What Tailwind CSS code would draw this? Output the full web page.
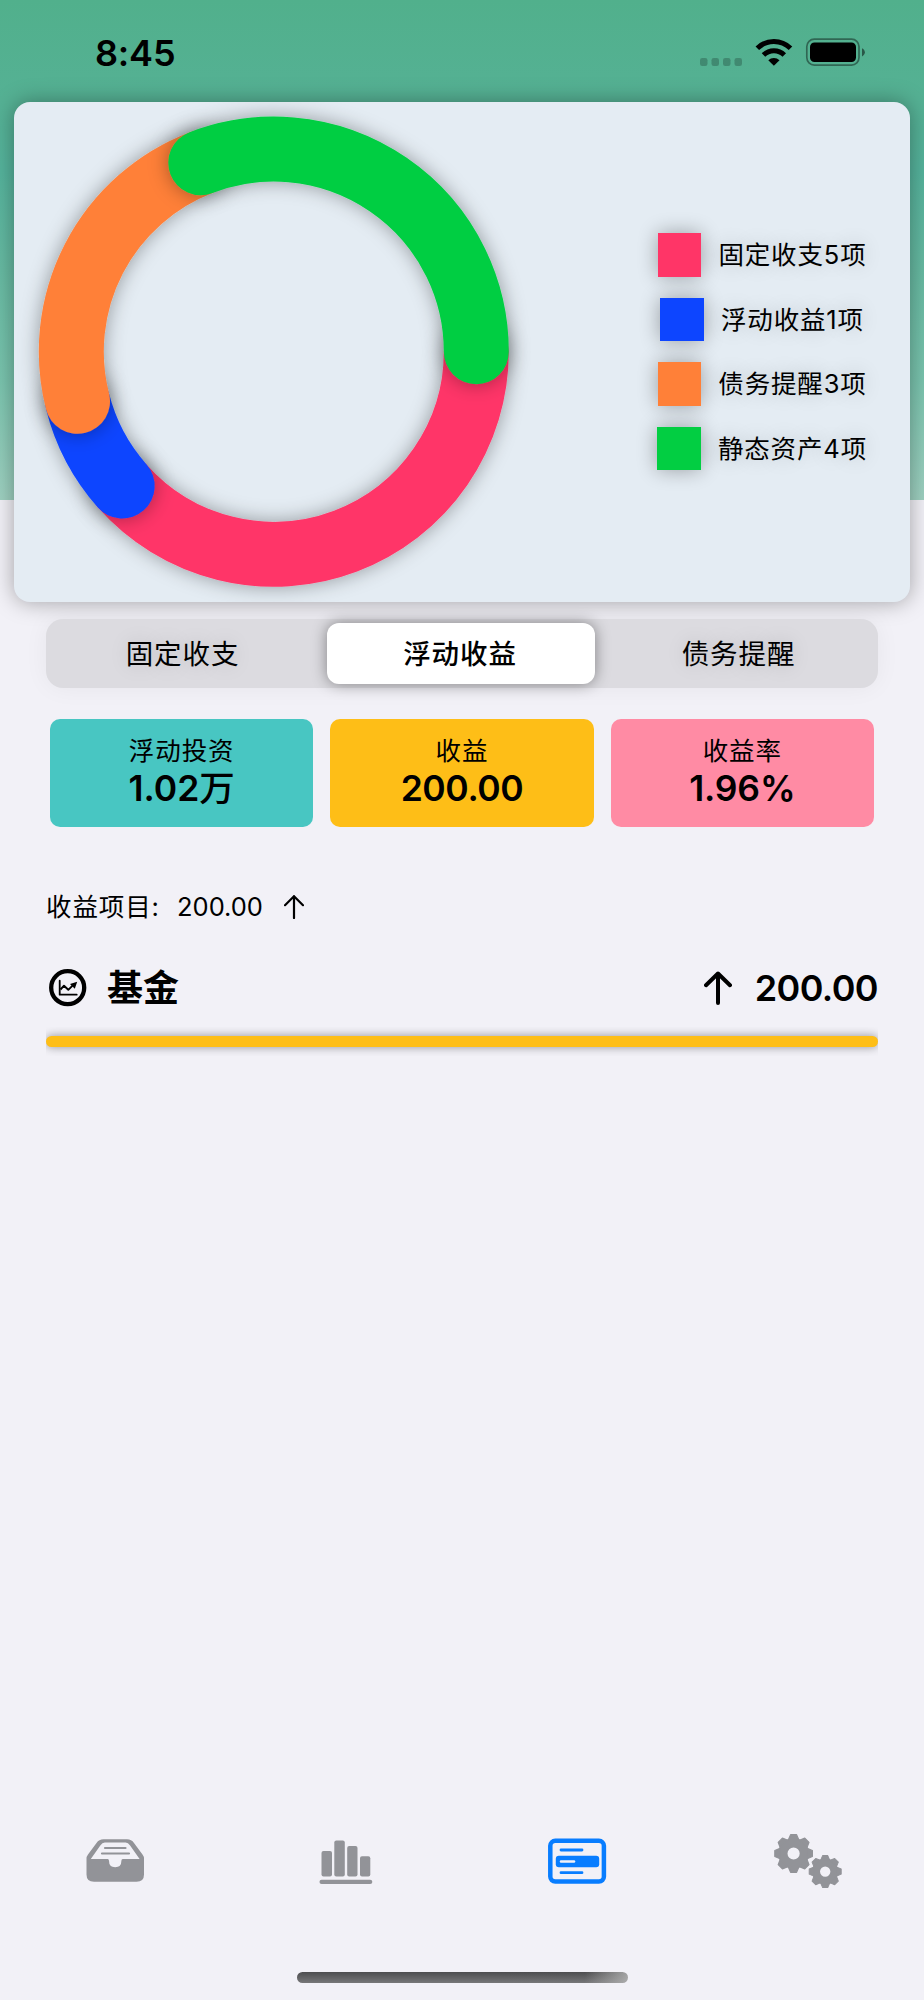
<!DOCTYPE html>
<html lang="zh-CN">
<head>
<meta charset="utf-8">
<title>资产</title>
<script src="https://cdn.jsdelivr.net/npm/@tailwindcss/browser@4"></script>
</head>
<body class="bg-[#f2f1f7]">
<div class="flex h-[2000px] w-[924px] flex-col overflow-hidden bg-[#f2f1f7] bg-[linear-gradient(180deg,#51b08c_0px,#55b194_100px,#55b39c_170px,#67baa2_270px,#7ac4ae_380px,#9fd1c1_500px,transparent_500px)] font-['Inter','Noto_Sans_CJK_SC',sans-serif] text-black">

  <header class="flex h-[102px] items-start justify-between pl-[95px] pr-[59px] pt-[30px]">
    <div class="pt-px text-[36px] font-semibold leading-[45px] tracking-[-0.2px]">8:45</div>
    <div class="flex pt-[8px]">
      <svg class="h-[30px] w-[165px]" viewBox="700 38 165 30">
        <g fill="#000" fill-opacity=".22"><rect x="700" y="58" width="7.5" height="8" rx="2.2"/><rect x="711.5" y="58" width="7.5" height="8" rx="2.2"/><rect x="723" y="58" width="7.5" height="8" rx="2.2"/><rect x="734.5" y="58" width="7.5" height="8" rx="2.2"/></g>
        <g fill="none" stroke="#000" stroke-width="5"><path d="M757.3 48.3a23.7 23.7 0 0 1 33.2 0"/><path d="M763.5 55a14.9 14.9 0 0 1 20.8 0"/></g>
        <path d="M773.9 65.8l-5.6-5.6a8.2 8.2 0 0 1 11.2 0z"/>
        <rect x="806.8" y="39.1" width="52.2" height="26" rx="7.5" fill="none" stroke="#000" stroke-opacity=".42" stroke-width="1.7"/>
        <rect x="810" y="42.5" width="46" height="19.5" rx="4.5"/>
        <path d="M862 48.2c3.8 2 3.8 6.200 0 8.200z" fill-opacity=".5"/>
      </svg>
    </div>
  </header>

  <section class="mx-[14px] flex h-[500px] shrink-0 items-center justify-between rounded-[16px] bg-[#e4ecf3] pr-[43px] shadow-[0_0_22px_rgba(0,0,0,0.34)]">
    <svg class="h-[500px] w-[520px]" viewBox="14 102 520 500">
      <defs><filter id="soft" x="0" y="90" width="560" height="530" filterUnits="userSpaceOnUse"><feDropShadow dx="0" dy="0" stdDeviation="10" flood-color="#000" flood-opacity=".36"/></filter></defs>
      <g fill="none" stroke-width="65" stroke-linecap="round">
        <g filter="url(#soft)"><path stroke="#ff3567" d="M476.300 351.700A202.500 202.500 0 0 1 122.200 486"/></g>
        <g filter="url(#soft)"><path stroke="#0d45ff" d="M122.200 486A202.500 202.500 0 0 1 77.500 401.300"/></g>
        <g filter="url(#soft)"><path stroke="#ff8038" d="M77.500 401.300A202.500 202.500 0 0 1 200.800 162.700"/></g>
        <g filter="url(#soft)"><path stroke="#02ce42" d="M200.800 162.700A202.500 202.500 0 0 1 476.300 351.700"/></g>
      </g>
    </svg>
    <ul class="-mt-px flex flex-col items-center gap-[21px] text-[25.500px] leading-[43.500px] tracking-[0.850px]">
      <li class="flex gap-[17px] [text-shadow:0_0_20px_rgba(0,0,0,0.2)]"><span class="size-[43.500px] bg-[#ff3567] shadow-[0_0_20px_rgba(0,0,0,0.33)]"></span>固定收支5项</li>
      <li class="flex gap-[17px] [text-shadow:0_0_20px_rgba(0,0,0,0.2)]"><span class="size-[43.500px] bg-[#0d45ff] shadow-[0_0_20px_rgba(0,0,0,0.33)]"></span>浮动收益1项</li>
      <li class="flex gap-[17px] [text-shadow:0_0_20px_rgba(0,0,0,0.2)]"><span class="size-[43.500px] bg-[#ff8038] shadow-[0_0_20px_rgba(0,0,0,0.33)]"></span>债务提醒3项</li>
      <li class="flex gap-[17px] [text-shadow:0_0_20px_rgba(0,0,0,0.2)]"><span class="size-[43.500px] bg-[#02ce42] shadow-[0_0_20px_rgba(0,0,0,0.33)]"></span>静态资产4项</li>
    </ul>
  </section>

  <nav class="mx-[46px] mt-[17px] grid h-[69px] shrink-0 grid-cols-[281px_268px_282px] rounded-[17px] bg-[#dcdbe0] py-[4px] text-center text-[27.500px] leading-[63px] tracking-[0.900px] shadow-[0_0_24px_rgba(0,0,0,0.05)]">
    <div class="pr-[8px] [text-shadow:0_0_20px_rgba(0,0,0,0.15)]">固定收支</div>
    <div class="h-[61px] rounded-[12px] bg-white pr-[2px] font-medium shadow-[0_0_15px_rgba(0,0,0,0.42)]">浮动收益</div>
    <div class="pl-[5px] [text-shadow:0_0_20px_rgba(0,0,0,0.15)]">债务提醒</div>
  </nav>

  <section class="mx-[50px] mt-[31px] grid h-[108px] shrink-0 grid-cols-3 gap-[17px] text-center">
    <div class="rounded-[10px] bg-[#48c6c2] pt-[14px]"><div class="text-[25.500px] leading-[36px] tracking-[0.900px]">浮动投资</div><div class="text-[35.500px] font-semibold leading-[40px]">1.02<span class="font-medium">万</span></div></div>
    <div class="rounded-[10px] bg-[#febe17] pt-[14px]"><div class="text-[25.500px] leading-[36px] tracking-[0.900px]">收益</div><div class="text-[35.500px] font-semibold leading-[40px] tracking-[-0.400px]">200.00</div></div>
    <div class="rounded-[10px] bg-[#ff8ba4] pt-[14px]"><div class="text-[25.500px] leading-[36px] tracking-[0.900px]">收益率</div><div class="text-[35.500px] font-semibold leading-[40px] tracking-[-0.200px]">1.96%</div></div>
  </section>

  <div class="ml-[46px] mt-[60px] flex h-[40px] shrink-0 items-center text-[25.500px] leading-[40px]">
    <span class="w-[131px] tracking-[0.900px]">收益项目:</span><span class="w-[107px]">200.00</span>
    <svg class="h-[24px] w-[20px]" viewBox="0 0 20 24" fill="none" stroke="#000" stroke-width="2.200" stroke-linecap="round" stroke-linejoin="round"><path d="M10 23V1.200M1 10.200L10 1.200l9 9"/></svg>
  </div>

  <div class="mx-[46px] mt-[36px] flex h-[50px] shrink-0 items-center text-[36px] font-semibold leading-[50px]">
    <svg class="ml-[3px] mr-[20px] h-[38px] w-[38px]" viewBox="0 0 38 38" fill="none" stroke="#000"><circle cx="18.700" cy="18.700" r="16.500" stroke-width="4.300"/><path d="M10.700 11.700v14h17" stroke-width="1.800" stroke-linecap="round" stroke-linejoin="round"/><path d="M11.500 20.500l3.500-3.800 4.300 4.100 5-5" stroke-width="1.900" stroke-linejoin="round"/><path d="M21 15l7.200-2.200-2.400 7z" fill="#000" stroke="none"/></svg>
    <span class="font-bold">基金</span>
    <svg class="ml-auto mr-[23px] h-[34px] w-[28px]" viewBox="0 0 28 34" fill="none" stroke="#000" stroke-width="4" stroke-linecap="round" stroke-linejoin="round"><path d="M14 32V2.500M2 14.200L14 2.500l12 11.700"/></svg>
    <span class="tracking-[-0.600px]">200.00</span>
  </div>

  <div class="mx-[46px] mt-[14px] shrink-0 overflow-hidden py-[9px]"><div class="h-[11px] rounded-full bg-[#febe17] shadow-[0_0_10px_rgba(0,0,0,0.4)]"></div></div>

  <footer class="mt-auto flex h-[200px] shrink-0 flex-col items-center">
    <nav class="flex h-[172px] w-full items-start pt-[30px]">
      <svg class="h-[60px] w-[231px]" viewBox="0 1830 231 60" fill="#929398"><path fill-rule="evenodd" d="M86.500 1858.500q0-2 1.500-4l8.500-11.500q2.500-3.700 7-3.700h23.500q4.500 0 7 3.700l8.500 11.500q1.500 2 1.500 4v16q0 7.300-7.500 7.300H94q-7.500 0-7.500-7.300zM90.800 1859h16.800q1.400 0 1.400 1.800 0 6.500 6.200 6.500t6.200-6.500q0-1.800 1.400-1.800h16.800l-9.500-13.500q-2-3-4.500-3h-20.800q-2.500 0-4.500 3z"/><path d="M105 1848h20.500M102 1853.500h27" stroke="#929398" stroke-width="2.200" stroke-linecap="round"/></svg>
      <svg class="h-[60px] w-[231px]" viewBox="231 1830 231 60" fill="#929398"><rect x="321.500" y="1851" width="10.500" height="25.500" rx="2"/><rect x="334.300" y="1840.500" width="10.500" height="36" rx="2"/><rect x="347.200" y="1846" width="10.300" height="30.500" rx="2"/><rect x="360" y="1856.200" width="10.300" height="20.300" rx="2"/><rect x="319.500" y="1879.700" width="52.800" height="4.300" rx="2.100"/></svg>
      <svg class="h-[60px] w-[231px]" viewBox="462 1830 231 60" fill="none" stroke="#087dff" stroke-linecap="round"><rect x="550.300" y="1840.800" width="53.600" height="40.700" rx="5" stroke-width="4.500"/><path d="M561 1850h21M561 1872.700h21" stroke-width="2.800"/><rect x="555.800" y="1855.700" width="43.400" height="11.500" rx="3" fill="#087dff" stroke="none"/><path d="M561 1861.500h13" stroke="#f2f1f7" stroke-width="2.500"/></svg>
      <svg class="h-[60px] w-[231px]" viewBox="693 1830 231 60">
        <defs><g id="gear" fill="none" stroke="#929398"><circle r="10.700" stroke-width="9.200"/><g fill="#929398" stroke-width="1.200" stroke-linejoin="round"><path id="tooth" d="M-5.300-13.500L-3-18.800h6L5.300-13.500z"/><use href="#tooth" transform="rotate(45)"/><use href="#tooth" transform="rotate(90)"/><use href="#tooth" transform="rotate(135)"/><use href="#tooth" transform="rotate(180)"/><use href="#tooth" transform="rotate(225)"/><use href="#tooth" transform="rotate(270)"/><use href="#tooth" transform="rotate(315)"/></g></g></defs>
        <use href="#gear" transform="translate(793.600 1853.500)"/><use href="#gear" transform="translate(825.200 1871.600) scale(.85)"/>
      </svg>
    </nav>
    <div class="h-[10.500px] w-[331px] rounded-full bg-[linear-gradient(90deg,transparent_87%,rgba(190,190,190,0.75)),linear-gradient(180deg,#4d4d4f,#777779)]"></div>
  </footer>
</div>
</body>
</html>
